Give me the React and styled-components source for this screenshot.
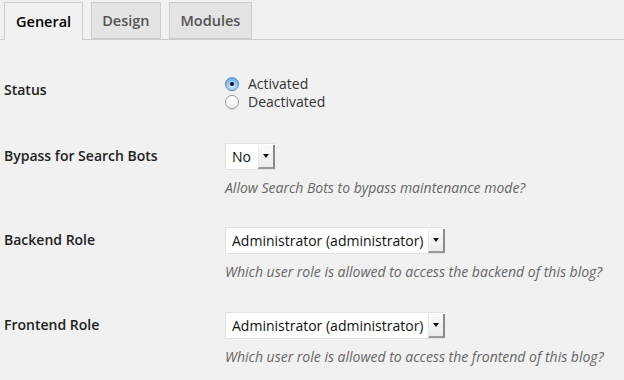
import React from "react";
import styled, { createGlobalStyle } from "styled-components";

const Global = createGlobalStyle`
  html, body { margin: 0; padding: 0; background: #f1f1f1; }
  body { font-family: "Open Sans", "Liberation Sans", sans-serif; font-size: 14px; color: #222; }
`;

const Page = styled.div`
  width: 624px;
  height: 380px;
  overflow: hidden;
  background: #f1f1f1;
`;

const TabBar = styled.div`
  display: flex;
  align-items: flex-end;
  gap: 8px;
  padding: 2px 0 0 4px;
  border-bottom: 1px solid #ccc;
  height: 37px;
`;

const Tab = styled.div`
  box-sizing: border-box;
  height: ${p => (p.$active ? "38px" : "37px")};
  margin-bottom: ${p => (p.$active ? "-1px" : "0")};
  padding: 0 ${p => p.$pad || 11}px;
  display: flex;
  align-items: center;
  border: 1px solid #ccc;
  border-bottom: ${p => (p.$active ? "none" : "1px solid #ccc")};
  background: ${p => (p.$active ? "#f1f1f1" : "#e4e4e4")};
  color: ${p => (p.$active ? "#000" : "#555")};
  font-size: 14.5px;
  font-weight: 600;
  padding-bottom: ${p => (p.$active ? "1px" : "0")};
`;

const Form = styled.div`
  display: flex;
  flex-direction: column;
`;

const Row = styled.div`
  display: flex;
  padding-top: ${p => p.$top}px;
`;

const Label = styled.div`
  width: 221px;
  padding-left: 4px;
  padding-top: ${p => p.$offset || 0}px;
  font-weight: 600;
  font-size: 14px;
  line-height: 26px;
  color: #222;
`;

const Field = styled.div`
  display: flex;
  flex-direction: column;
`;

const RadioList = styled.div`
  display: flex;
  flex-direction: column;
`;

const RadioItem = styled.label`
  display: flex;
  align-items: center;
  gap: 9px;
  height: 18px;
  line-height: 18px;
  font-size: 14px;
  color: #333;
`;

const RadioCircle = styled.span`
  box-sizing: border-box;
  width: 14px;
  height: 14px;
  border-radius: 50%;
  display: flex;
  align-items: center;
  justify-content: center;
  border: 1px solid ${p => (p.$checked ? "#5a8bc4" : "#9a9a9a")};
  background: ${p =>
    p.$checked
      ? "radial-gradient(circle at 50% 70%, #d6ecff 0%, #8dc0f2 55%, #5d9ce0 100%)"
      : "linear-gradient(#ffffff, #f0f0f0)"};
  box-shadow: 0 1px 1px rgba(0,0,0,0.08);
`;

const RadioDot = styled.span`
  width: 4px;
  height: 4px;
  border-radius: 50%;
  background: #111;
`;

const Select = styled.div`
  box-sizing: border-box;
  display: flex;
  align-items: stretch;
  height: 27px;
  width: ${p => p.$width}px;
  background: #fff;
  border: 1px solid #e2e2e2;
  border-right: none;
`;

const SelectValue = styled.div`
  flex: 1;
  display: flex;
  align-items: center;
  padding-left: 6px;
  font-size: 14px;
  color: #111;
`;

const SelectArrow = styled.div`
  box-sizing: border-box;
  width: 17px;
  margin: 1px 0 0;
  display: flex;
  align-items: center;
  justify-content: center;
  background: linear-gradient(#fbfbfb, #ececec);
  border-left: 1px solid #e8e8e8;
  border-right: 2px solid #8a8a8a;
  border-bottom: 2px solid #9a9a9a;
  &::after {
    content: "";
    width: 0;
    height: 0;
    border-left: 3px solid transparent;
    border-right: 3px solid transparent;
    border-top: 4px solid #111;
  }
`;

const Description = styled.div`
  margin-top: 8px;
  font-style: italic;
  font-size: 14px;
  line-height: 20px;
  color: #666;
`;

function Radio({ checked, children }) {
  return (
    <RadioItem>
      <RadioCircle $checked={checked}>{checked && <RadioDot />}</RadioCircle>
      {children}
    </RadioItem>
  );
}

function Dropdown({ value, width }) {
  return (
    <Select $width={width}>
      <SelectValue>{value}</SelectValue>
      <SelectArrow />
    </Select>
  );
}

export default function App() {
  return (
    <Page>
      <Global />
      <TabBar>
        <Tab $active>General</Tab>
        <Tab $pad={10}>Design</Tab>
        <Tab>Modules</Tab>
      </TabBar>
      <Form>
        <Row $top={35}>
          <Label $offset={2}>Status</Label>
          <Field>
            <RadioList>
              <Radio checked>Activated</Radio>
              <Radio>Deactivated</Radio>
            </RadioList>
          </Field>
        </Row>
        <Row $top={32}>
          <Label>Bypass for Search Bots</Label>
          <Field>
            <Dropdown value="No" width={50} />
            <Description>Allow Search Bots to bypass maintenance mode?</Description>
          </Field>
        </Row>
        <Row $top={29}>
          <Label>Backend Role</Label>
          <Field>
            <Dropdown value="Administrator (administrator)" width={220} />
            <Description>Which user role is allowed to access the backend of this blog?</Description>
          </Field>
        </Row>
        <Row $top={30}>
          <Label>Frontend Role</Label>
          <Field>
            <Dropdown value="Administrator (administrator)" width={220} />
            <Description>Which user role is allowed to access the frontend of this blog?</Description>
          </Field>
        </Row>
      </Form>
    </Page>
  );
}
